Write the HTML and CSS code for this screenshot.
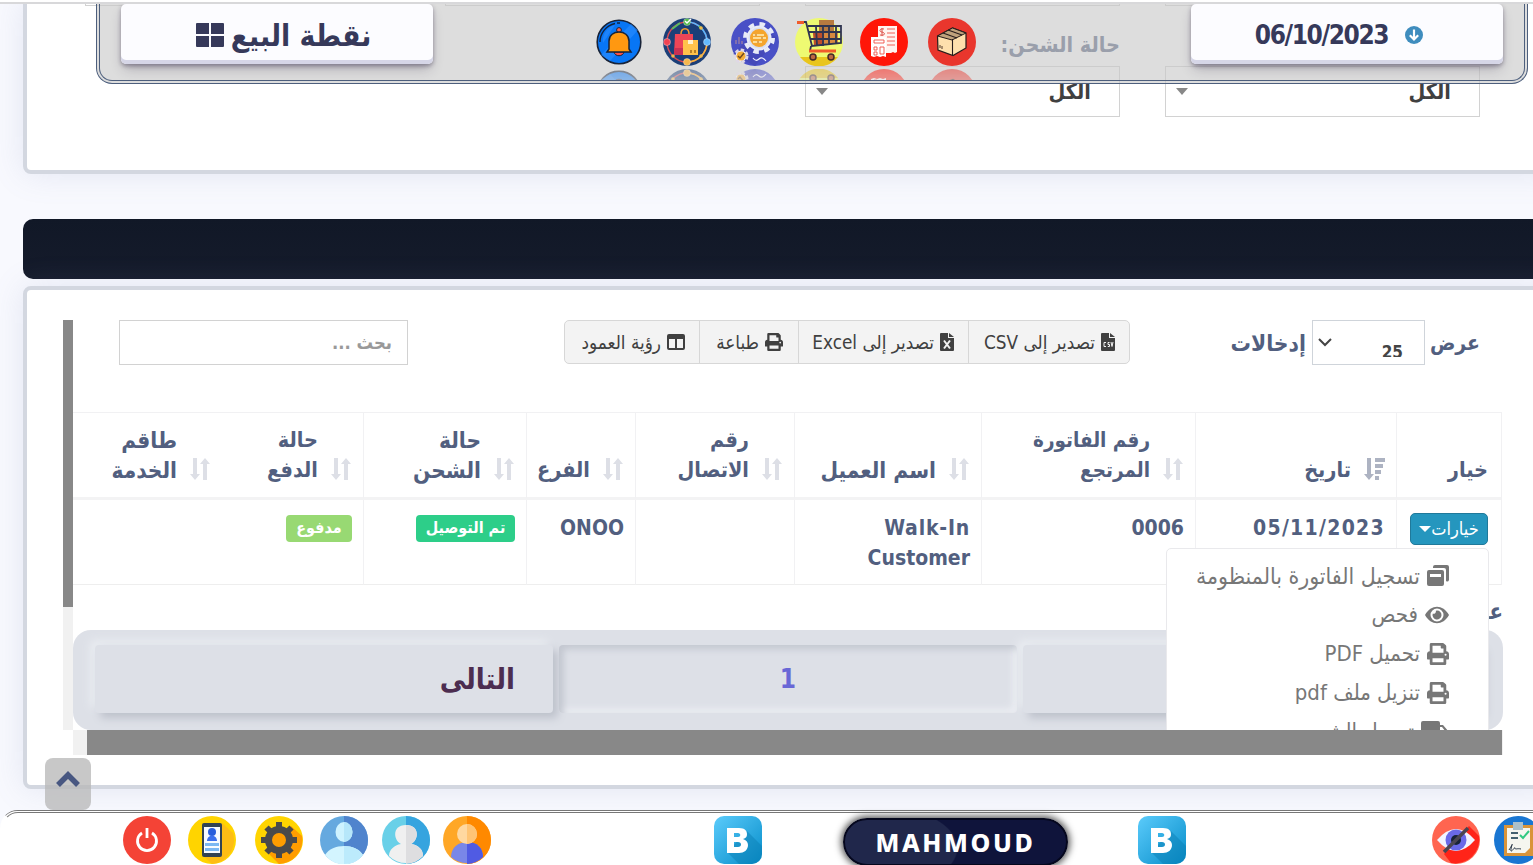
FILE: index.html
```
<!DOCTYPE html>
<html lang="ar">
<head>
<meta charset="utf-8">
<title>نقطة البيع</title>
<link rel="stylesheet" href="styles.css">
</head>
<body>
<svg class="defs" width="0" height="0">
  <symbol id="sort" viewBox="0 0 22 24"><path d="M4 1h4v16h3l-5 6-5-6h3zM14 23h4V7h3l-5-6-5 6h3z"/></symbol>
  <symbol id="printer" viewBox="0 0 512 512"><path d="M448 192V77a32 32 0 0 0-9-22L393 9a32 32 0 0 0-22-9H96a32 32 0 0 0-32 32v160c-35 0-64 29-64 64v112a16 16 0 0 0 16 16h48v96a32 32 0 0 0 32 32h320a32 32 0 0 0 32-32v-96h48a16 16 0 0 0 16-16V256c0-35-29-64-64-64zm-64 256H128v-96h256zm0-224H128V64h192v48a16 16 0 0 0 16 16h48zm48 72a24 24 0 1 1 0-48 24 24 0 0 1 0 48z"/></symbol>
  <symbol id="brand" viewBox="0 0 48 48">
    <defs><linearGradient id="bg" x1="0" y1="0" x2="1" y2="1"><stop offset="0" stop-color="#5bcbfb"/><stop offset="1" stop-color="#068dc9"/></linearGradient></defs>
    <rect width="48" height="48" rx="10" fill="url(#bg)"/>
    <path d="M33 15L48 30v8a10 10 0 0 1-10 10H25L13 36z" fill="#087db2" opacity=".45"/>
    <path fill-rule="evenodd" fill="#fff" d="M13 12h12c6 0 8 3 8 6s-1 4-4 5c3 1 5 3 5 6 0 5-4 8-9 8H13zM20 17v4h4c3 0 3-4 0-4zM20 26v5h4c4 0 4-5 0-5z"/>
  </symbol>
</svg>

<main class="page">
  <section class="card filters">
    <div class="filter-row filter-first"><div class="select"></div><div class="select"></div><div class="select"></div><div class="select"></div></div>
    <div class="filter-row">
      <div class="field"><label class="label" dir="rtl">حالة الشحن:</label><div class="select"><i class="caret"></i><span>الكل</span></div></div>
      <div class="field"><div class="label"></div><div class="select"><i class="caret"></i><span>الكل</span></div></div>
    </div>
  </section>

  <div class="banner"></div>

  <section class="card results">
    <div class="scroller">
      <div class="vbar"><div class="vthumb"></div></div>
      <div class="view">
        <div class="tools">
          <div class="search" dir="rtl">بحث ...</div>
          <div class="buttons" dir="rtl">
            <span class="btn csv"><svg width="14" height="18" viewBox="0 0 14 18"><path d="M1 0h7v5h6v12a1 1 0 0 1-1 1H1a1 1 0 0 1-1-1V1a1 1 0 0 1 1-1zM9 0l5 4H9z"/><path d="M5 9.500H3v4h2M8.500 9.500h-1.500v2h1.500v2H6.800M10 9l1 4.500L12 9" fill="none" stroke="#f3f3f3"/></svg><b>تصدير إلى CSV</b></span>
            <span class="btn excel"><svg width="14" height="18" viewBox="0 0 14 18"><path d="M1 0h7v5h6v12a1 1 0 0 1-1 1H1a1 1 0 0 1-1-1V1a1 1 0 0 1 1-1zM9 0l5 4H9z"/><path d="M4 7.500l6 8M10 7.500l-6 8" fill="none" stroke="#f3f3f3" stroke-width="2"/></svg><b>تصدير إلى Excel</b></span>
            <span class="btn print"><svg width="18" height="18"><use href="#printer"/></svg><b>طباعة</b></span>
            <span class="btn cols"><svg width="18" height="16" viewBox="0 0 18 16"><path fill-rule="evenodd" d="M2 0h14a2 2 0 0 1 2 2v12a2 2 0 0 1-2 2H2a2 2 0 0 1-2-2V2a2 2 0 0 1 2-2zM2 5v9h6V5zM10 5v9h6V5z"/></svg><b>رؤية العمود</b></span>
          </div>
          <div class="length" dir="rtl"><span class="show">عرض</span><div class="count"><em>25</em><svg width="14" height="9" viewBox="0 0 14 9"><path d="M1 1l6 6 6-6" fill="none" stroke="#444" stroke-width="2"/></svg></div><span>إدخالات</span></div>
        </div>

        <table dir="rtl">
          <colgroup><col class="c1"><col class="c2"><col class="c3"><col class="c4"><col class="c5"><col class="c6"><col class="c7"><col class="c8"><col class="c9"></colgroup>
          <thead><tr>
            <th><div>خيار</div></th>
            <th><div><svg class="active" width="22" height="24" viewBox="0 0 22 24"><path d="M4 1h4v16h3l-5 6-5-6h3zM12 1h10v4H12zM12 7h8v4h-8zM12 13h6v4h-6zM12 19h4v4h-4z"/></svg>تاريخ</div></th>
            <th class="tight"><div><svg width="22" height="24"><use href="#sort"/></svg><p>رقم الفاتورة<br>المرتجع</p></div></th>
            <th class="wide"><div><svg width="22" height="24"><use href="#sort"/></svg>اسم العميل</div></th>
            <th><div><svg width="22" height="24"><use href="#sort"/></svg><p>رقم<br>الاتصال</p></div></th>
            <th><div><svg width="22" height="24"><use href="#sort"/></svg>الفرع</div></th>
            <th class="wide"><div><svg width="22" height="24"><use href="#sort"/></svg><p>حالة<br>الشحن</p></div></th>
            <th class="plain"><div><svg width="22" height="24"><use href="#sort"/></svg><p>حالة<br>الدفع</p></div></th>
            <th class="plain wide"><div><svg width="22" height="24"><use href="#sort"/></svg><p>طاقم<br>الخدمة</p></div></th>
          </tr></thead>
          <tbody><tr>
            <td class="action"><span class="option">خيارات<i></i></span></td>
            <td><span class="date">05/11/2023</span></td><td>0006</td><td><span class="walk">Walk-In</span><br>Customer</td><td></td><td>ONOO</td>
            <td><span class="tag shipped">تم التوصيل</span></td>
            <td class="plain"><span class="tag paid">مدفوع</span></td><td class="plain"></td>
          </tr></tbody>
        </table>
        <div class="info" dir="rtl">عرض</div>
        <div class="pages">
          <div class="page-btn next" dir="rtl">التالى</div><div class="page-btn current">1</div><div class="page-btn"></div>
        </div>

        <div class="menu" dir="rtl">
          <div><svg width="22" height="22" viewBox="0 0 22 22"><path d="M8 0h12a2 2 0 0 1 2 2v13a2 2 0 0 1-3 1V5a2 2 0 0 0-2-2H6V2a2 2 0 0 1 2-2z"/><path fill-rule="evenodd" d="M2 5h13a2 2 0 0 1 2 2v12a2 2 0 0 1-2 2H2a2 2 0 0 1-2-2V7a2 2 0 0 1 2-2zM3 9v3h11V9z"/></svg><span class="register">تسجيل الفاتورة بالمنظومة</span></div>
          <div><svg width="24" height="20" viewBox="0 0 24 20"><path fill-rule="evenodd" d="M0 10C6-1 18-1 24 10 18 21 6 21 0 10zM12 3.500a6.500 6.500 0 1 0 0 13 6.500 6.500 0 0 0 0-13z"/><path d="M12 5.500a4.500 4.500 0 1 1-4.300 3.200 2.500 2.500 0 0 0 3.200-3z"/></svg><span>فحص</span></div>
          <div><svg width="22" height="22"><use href="#printer"/></svg><span>تحميل PDF</span></div>
          <div><svg width="22" height="22"><use href="#printer"/></svg><span>تنزيل ملف pdf</span></div>
          <div><svg width="28" height="22" viewBox="0 0 28 22"><path fill-rule="evenodd" d="M2 0h15a2 2 0 0 1 2 2v2h3l6 7v6H0V2a2 2 0 0 1 2-2zM19 6v5h6l-4-5z"/></svg><span>تحميل الشحن</span></div>
        </div>
      </div>
      <div class="hbar"><div class="hthumb"></div></div>
    </div>
  </section>
</main>

<div class="top-line"></div>
<header class="topbar">
  <div class="plate pos"><svg width="28" height="24" viewBox="0 0 28 24"><path d="M1 0h12v11H0V1a1 1 0 0 1 1-1zM15 0h12a1 1 0 0 1 1 1v10H15zM0 13h13v11H1a1 1 0 0 1-1-1zM15 13h13v10a1 1 0 0 1-1 1H15z"/></svg><span dir="rtl">نقطة البيع</span></div>
  <nav class="shortcuts">
    <svg viewBox="0 0 48 48"><circle cx="24" cy="24" r="21.800" fill="#0876f5" stroke="#182338" stroke-width="1.600"/><path d="M8 25A16 16 0 0 1 20 7M23 5h3M6 37L36 6l7 6L15 43z" fill="#2c8dff" opacity=".6"/><path d="M5 24A19 19 0 0 1 20 5.500M22 5h3" fill="none" stroke="#13233e" stroke-width="1.400"/><circle cx="24" cy="12" r="2.400" fill="#f26552" stroke="#172338"/><path d="M19 34c1 5 9 5 10 0z" fill="#fb5148" stroke="#172338"/><path d="M14 31V23c0-12 20-12 20 0v8l2 3H12z" fill="#ff9811" stroke="#172338" stroke-width="1.500"/></svg>
    <svg viewBox="0 0 48 48"><circle cx="24" cy="24" r="24" fill="#1b3f78"/><circle cx="24" cy="24" r="20" fill="none" stroke="#d94b55" stroke-width="1.400"/><path d="M24 4a20 20 0 0 1 20 20" fill="none" stroke="#58b8ff" stroke-width="1.600"/><path d="M44 24a20 20 0 0 1-20 20" fill="none" stroke="#f4b542" stroke-width="1.600"/><path d="M9 11l8-6M39 11l-3-3" stroke="#59bc60" stroke-width="2"/><path d="M18 16c0-7 8-7 8 0" fill="none" stroke="#f69e2d" stroke-width="1.500"/><path d="M12 16h18v21H11z" fill="#ed4557"/><path d="M11 30h9v7h-9z" fill="#c93154"/><path d="M20 22h15v15H20z" fill="#ffc24b"/><path d="M25 22h5v4h-5z" fill="#fff2d0"/><path d="M27 32h2v3h-2zM31 32h2v3h-2z" fill="#b98026"/><g stroke="#fff" stroke-opacity=".35"><circle cx="24" cy="4" r="3.500" fill="#53b848"/><circle cx="4" cy="24" r="3.500" fill="#f04352"/><circle cx="44" cy="24" r="3.500" fill="#63baff"/><circle cx="24" cy="44" r="3.500" fill="#f5b74e"/></g><path d="M22 3l2 2 4-4" stroke="#fff" fill="none" stroke-width="1.500"/><g fill="#edb84e"><circle cx="38" cy="38" r="1.800"/><circle cx="38" cy="10" r="1.800"/><circle cx="10" cy="38" r="1.800"/></g></svg>
    <svg viewBox="0 0 48 48"><circle cx="24" cy="24" r="24" fill="#4950c6"/><path d="M2 36L30 8l16 12L24 48z" fill="#4141ac" opacity=".5"/><circle cx="28" cy="20" r="11.500" fill="#d8def1" stroke="#e8ebf7" stroke-width="2"/><circle cx="28" cy="20" r="14" fill="none" stroke="#e8ebf7" stroke-width="4" stroke-dasharray="5.500 5.500"/><circle cx="28" cy="20" r="9" fill="#f5a52d"/><path d="M22 17h11M22 20h13M22 24h9" stroke="#fff0ba" stroke-width="1.300"/><path d="M25 16v2M31 19v2M27 23v2" stroke="#b66d1c"/><circle cx="10" cy="38" r="5.500" fill="#fff" stroke="#dfd8e5" stroke-width="4" stroke-dasharray="3 2"/><circle cx="10" cy="38" r="4.500" fill="#f5ad37"/><path d="M7 38l2 2 4-5" fill="none" stroke="#704923" stroke-width="1.500"/><path d="M5 26v-4M8 26v-7M11 26v-3" stroke="#9278a8" stroke-width="1.500"/><path d="M22 40q3 4 6 1t7 2" fill="none" stroke="#f6f6ff" stroke-width="1.200"/></svg>
    <svg viewBox="0 0 48 48"><circle cx="24" cy="24" r="24" fill="#eefa72"/><path d="M5 39h38A24 24 0 0 1 5 39z" fill="#e9c51d"/><path d="M24 2h15v16H24z" fill="#b77a40"/><path d="M18 15h11v13H19z" fill="#bd4e2b"/><path d="M29 14h14v12H29z" fill="#d7893f"/><path d="M9 4h2l6 24 29-3V8H13M14 14h32M15 21h31M21 9l1 18M28 8v20M34 8v18M41 8v18M16 28l-1 5h26" fill="none" stroke="#303550" stroke-width="1.800"/><path d="M2 4.500h7M14 33h27" stroke="#f15b2b" stroke-width="3"/><circle cx="18" cy="39" r="3" fill="#bd6741" stroke="#462b27" stroke-width="1.500"/><circle cx="36" cy="39" r="3" fill="#bd6741" stroke="#462b27" stroke-width="1.500"/></svg>
    <svg viewBox="0 0 48 48"><circle cx="24" cy="24" r="24" fill="#ff1608"/><path d="M18 8h19v26l-2 1-2-1-2 1H26V19h-8z" fill="#fff4ef"/><path d="M11 19h15v20l-3-1-3 1-3-1-3 1-3-1z" fill="#fff"/><path d="M27 11h8M27 15h8M27 19h8M27 23h8M27 27h8M14 22h10v3H14zM14 29h3v3h-3zM14 34h3v3h-3zM20 29h4v7h-4z" fill="none" stroke="#ef5146" stroke-width=".9"/><path d="M24 11c-5-1-5 3-2 3 4 1 3 4-2 3M22 10v8" fill="none" stroke="#dc5048"/></svg>
    <svg viewBox="0 0 48 48"><circle cx="24" cy="24" r="24" fill="#e9362d"/><path d="M9.500 18l15-8 13.500 5v15L25 37.500 10 32z" fill="#fee0ad" stroke="#271d1c" stroke-width="1.200"/><path d="M9.500 18l15-8 13.500 5-14 7z" fill="#bfa27c" stroke="#271d1c"/><path d="M24.500 21v16M15 15l14 5M20 12l14 5" fill="none" stroke="#271d1c" stroke-width="1.100"/><path d="M12 27v3M14 28v3" stroke="#51382a"/></svg>
  </nav>
  <div class="plate today"><span>06/10/2023</span><svg width="18" height="18" viewBox="0 0 18 18"><circle cx="9" cy="9" r="9" fill="#3f8dbe"/><path d="M9 3.500v10M4.800 9.300L9 13.500l4.200-4.200" fill="none" stroke="#fff" stroke-width="2.200"/></svg></div>
</header>

<div class="to-top"><svg width="26" height="18" viewBox="0 0 26 18"><path d="M3 15L13 5l10 10" fill="none" stroke="#485781" stroke-width="5.500"/></svg></div>

<footer class="dock">
  <div class="group users">
    <svg viewBox="0 0 48 48"><circle cx="24" cy="24" r="24" fill="#f44336"/><path d="M19 17a9.500 9.500 0 1 0 10 0M24 12v10" fill="none" stroke="#fff" stroke-width="2.800"/></svg>
    <svg viewBox="0 0 48 48"><circle cx="24" cy="24" r="24" fill="#ffd400"/><path d="M34 7l11 10a24 24 0 0 1-21 31l-9-8z" fill="#fdbd15"/><rect x="14" y="7" width="20" height="34" rx="2" fill="#314354"/><path d="M16 11h16v26H16z" fill="#f7fbff"/><circle cx="24" cy="16" r="4" fill="#285edc"/><path d="M19 25c0-7 10-7 10 0z" fill="#3b70ed"/><path d="M17 27h14v3H17zM17 32h14v3H17z" fill="#7bb8f2"/></svg>
    <svg viewBox="0 0 48 48"><circle cx="24" cy="24" r="24" fill="#ffd400"/><path d="M36 10l11 10a24 24 0 0 1-23 28l-10-10z" fill="#ff9d00"/><g stroke="#4a4a4a" stroke-width="6"><path d="M24 6v36M6 24h36M11.500 11.500l25 25M36.500 11.500l-25 25"/></g><circle cx="24" cy="24" r="10.500" fill="#ff9d00" stroke="#4a4a4a" stroke-width="7"/></svg>
    <svg viewBox="0 0 48 48"><circle cx="24" cy="24" r="24" fill="#65a9df"/><path d="M24 0a24 24 0 0 1 0 48z" fill="#5084cd"/><ellipse cx="24" cy="16" rx="8.500" ry="10" fill="#cef3ff"/><path d="M24 6a8.500 10 0 0 1 0 20z" fill="#b6e7fa"/><path d="M5 39c7-12 31-12 38 0a24 24 0 0 1-38 0z" fill="#d3f5ff"/><path d="M24 30c8 0 15 3 19 9a24 24 0 0 1-19 9z" fill="#bcebfc"/></svg>
    <svg viewBox="0 0 48 48"><circle cx="24" cy="24" r="24" fill="#69d0e8"/><path d="M24 0a24 24 0 0 1 0 48z" fill="#36a4df"/><path d="M24 9c14 0 13 15 5 19 8 1 12 6 12 12a24 24 0 0 1-34 0c0-6 5-11 12-12-8-4-9-19 5-19z" fill="#f0f0f0"/><path d="M24 9c14 0 13 15 5 19 8 1 12 6 12 12a24 24 0 0 1-17 8z" fill="#dedee0"/></svg>
    <svg viewBox="0 0 48 48"><circle cx="24" cy="24" r="24" fill="#ffa726"/><path d="M24 0a24 24 0 0 1 0 48z" fill="#ff8900"/><path d="M8 41c0-20 32-20 32 0a24 24 0 0 1-32 0z" fill="#7987e8"/><path d="M24 26c10 0 16 6 16 15a24 24 0 0 1-16 7z" fill="#505be3"/><circle cx="24" cy="18" r="10" fill="#ffd8a0"/><path d="M24 8a10 10 0 0 1 0 20z" fill="#ffc474"/></svg>
  </div>
  <svg class="brand-one"><use href="#brand"/></svg>
  <div class="name">MAHMOUD</div>
  <svg class="brand-two"><use href="#brand"/></svg>
  <div class="group extras">
    <svg viewBox="0 0 48 48"><circle cx="24" cy="24" r="24" fill="#ff6550"/><path d="M37 10l10 10a24 24 0 0 1-28 27l-7-9z" fill="#ff2419"/><path d="M5 24Q24 2 43 24 24 46 5 24z" fill="#f2f4ff"/><circle cx="24" cy="24" r="10.500" fill="#6a69e8"/><circle cx="24" cy="24" r="5" fill="#182338"/><path d="M12 36l24-24" stroke="#4b4551" stroke-width="3.500"/></svg>
    <svg viewBox="0 0 48 48"><circle cx="24" cy="24" r="24" fill="#1976d2"/><path d="M10 9h29v31H10z" fill="#d99439"/><path d="M13 12h23v20l-5 5H13z" fill="#f5f6ef"/><path d="M19 6h10v8H19z" fill="#abc0cb"/><path d="M17 17h7M17 22h7" stroke="#44616f" stroke-width="2"/><path d="M26 19l3 3 6-7" fill="none" stroke="#31c981" stroke-width="2"/><path d="M15 34c5-8 3-7 2-1s4-3 4-1 2 0 6 1" fill="none" stroke="#263444"/></svg>
  </div>
</footer>
</body>
</html>
```
FILE: styles.css
```
*{box-sizing:border-box}
html,body{margin:0;height:100%;overflow:hidden}
body{background:#f8f9fe;color:#525f7f;font-family:"DejaVu Sans Condensed","DejaVu Sans",sans-serif;font-stretch:condensed}
svg{display:block;flex:none}
p{margin:0}
.defs{position:absolute}
.page{width:1560px;height:865px;padding-left:23px;overflow:hidden}
.card{background:#fff;border:4px solid #d3d7e0;border-radius:8px;box-shadow:0 0 32px rgba(120,130,180,.16)}
.filters{height:174px;border-top:0;border-radius:0 0 8px 8px}
.filter-row{display:flex;gap:45px;padding-left:778px}
.filter-first{height:6px;padding-left:58px;align-items:flex-end}
.filter-first .select{height:50px}
.select{width:315px;height:51px;border:1px solid #d2d2d2;background:#fff;display:flex;justify-content:space-between;align-items:center;padding:0 28px 0 10px;color:#404040;font-size:21.5px;font-weight:bold}
.caret{border:6px solid transparent;border-top:7px solid #888;border-bottom:0}
.label{display:block;height:60px;padding-top:23px;text-align:right;font-weight:bold;font-size:21.500px;line-height:32px}
.banner{height:60px;margin-top:45px;background:linear-gradient(#111827,#151b2b);border-radius:10px}
.results{height:503px;margin-top:7px;padding:30px 0 0 36px}
.scroller{width:1440px;height:435px;display:grid;grid-template:410px 25px/10px 1430px}
.vbar{background:#f1f1f1}
.vthumb{height:287px;background:#888}
.hbar{grid-column:2;background:#f1f1f1;padding:0 1px 0 14px}
.hthumb{height:25px;background:#888}
.view{position:relative;overflow:hidden}
.tools{height:92px;display:flex;align-items:flex-start;padding-left:46px}
.search{width:289px;height:45px;border:1px solid #d2d2d2;line-height:43px;padding-right:15px;color:#999;font-size:18.3px;font-weight:bold}
.buttons{width:566px;height:44px;margin-left:156px;display:flex;border:1px solid #d7d7d7;border-radius:5px;background:#f3f3f3;color:#404040}
.btn{display:flex;align-items:center;gap:6px;padding-right:14px;border-left:1px solid #d7d7d7;font-size:18.8px;white-space:nowrap}
.btn:last-child{border-left:0}
.btn b{font-weight:normal}
.btn svg{fill:#404040}
.csv{width:161px}.excel{width:170px}.print{width:99px;padding-right:15px}.cols{width:134px}
.length{width:250px;height:45px;margin-left:100px;display:flex;align-items:center;gap:6px;font-size:22.7px;font-weight:bold}
.show{width:49px;font-size:21px}
.count{flex:none;width:113px;height:45px;border:1px solid #cfd4da;color:#444;display:flex;justify-content:space-between;padding:17px 21px 0 5px}
.count em{height:19px;overflow:hidden;font-size:17px;font-style:normal;line-height:29px}
table{width:1429px;height:173px;table-layout:fixed;border-collapse:separate;border-spacing:0;border-top:1px solid #f1f1f3;border-right:1px solid #f1f1f3}
.c1{width:105px}.c2{width:201px}.c3{width:214px}.c4{width:187px}.c5{width:159px}.c6{width:109px}.c7{width:163px}.c8{width:141px}.c9{width:149px}
th,td{border-left:1px solid #f1f1f3;padding:0 11px 0 0;text-align:right;white-space:nowrap}
.plain{border-left:0}
th{height:87px;border-bottom:3px solid #f3f3f4;padding-bottom:12px;vertical-align:bottom;font-size:21.500px;line-height:30px}
th.tight{font-size:20.500px}
th.wide{font-size:22.500px}
th:first-child{padding-right:13px}
th div{display:flex;align-items:flex-end;gap:12px}
th svg{fill:#dddfe6;margin-bottom:4px}
th svg.active{fill:#adb3c2}
td{height:85px;border-bottom:1px solid #eee;padding-top:13px;vertical-align:top;font-size:21px;font-weight:bold;line-height:30px}
.date{letter-spacing:1.3px}
.walk{letter-spacing:.8px}
td.action{padding-right:13px}
.option{display:flex;width:78px;height:32px;align-items:center;justify-content:center;border:1px solid #20799a;border-radius:5px;background:#2596be;color:#fff;font-size:18px;font-weight:normal}
.option i{border:6px solid transparent;border-top-color:#fff;border-bottom:0}
.tag{display:block;height:27px;border-radius:4px;color:#fff;text-align:center;font-size:16px;line-height:26px;margin-top:2px}
.shipped{width:99px;background:#2dce89}.paid{width:66px;background:#98d973}
.info{height:45px;padding-top:12px;font-size:22px;font-weight:bold;line-height:30px}
.pages{height:100px;border-radius:18px;background:#dde0e7;display:flex;gap:6px;padding:15px 22px 17px}
.page-btn{flex:0 0 458px;border-radius:4px;box-shadow:5px 5px 8px #bdc1cb,-5px -5px 9px #e9ecf1;color:#6967d6;text-align:center;font-weight:bold;font-size:26px;line-height:68px}
.next{padding-right:38px;color:#4c2d50;text-align:right;font-size:29px}
.current{box-shadow:inset 4px 4px 7px #c3c7d0,inset -4px -4px 7px #eceef3}
.menu{position:absolute;left:1093px;top:228px;width:323px;height:240px;padding:7px 39px;background:#fff;border:1px solid #e9e9ec;border-radius:5px;color:#777;font-size:22px}
.menu div{height:39px;display:flex;align-items:center;gap:7px;white-space:nowrap}
.menu svg{fill:#777}
.register{font-size:22.900px}
.top-line{position:absolute;left:0;right:0;top:0;height:4px;background:#d8d8da;border-top:2px solid #fff}
.topbar{position:absolute;left:96px;top:4px;width:1432px;height:80px;border:4px double #4d5f7d;border-top:0;border-radius:0 0 16px 16px;background:rgba(200,200,200,.61);display:flex;align-items:flex-start;overflow:hidden}
.plate{flex:none;height:60px;border-radius:5px;background:#fcfcff;box-shadow:0 2px 4px rgba(45,35,66,.4),0 7px 13px -3px rgba(45,35,66,.3),inset 0 -4px 0 #d6d6e7;color:#36395a;display:flex;align-items:center;justify-content:center;font-weight:bold}
.plate svg{fill:#36395a}
.pos{width:312px;margin-left:21px;gap:7px;font-size:29.8px;padding:2px 0 0 13px}
.today{width:312px;margin-left:215px;gap:17px;font-size:26px;letter-spacing:-1.4px;padding:2px 16px 0 0}
.shortcuts{width:381px;margin:14px 0 0 162px;display:flex;gap:20px}
.shortcuts svg{width:48px;height:48px;-webkit-box-reflect:below 3px linear-gradient(transparent,rgba(0,0,0,.5))}
.shortcuts svg:nth-child(4){margin-left:-4px}
.shortcuts svg:nth-child(5){margin-left:-3px}
.to-top{position:absolute;left:45px;top:758px;width:46px;height:52px;border-radius:8px;background:rgba(185,185,185,.78);display:flex;justify-content:center;padding-top:12px}
.dock{position:absolute;left:0;top:810px;width:1600px;height:75px;border-top:3px double #777;border-left:3px double transparent;border-radius:18px 0 0 0;background:#fff;display:flex;align-items:flex-start;padding:3px 0 0 120px}
.dock svg{width:48px;height:48px}
.users{width:368px;gap:17px}
.users svg:nth-child(3){margin-left:2px}
.users svg:nth-child(5){margin-left:-3px}
.users svg:nth-child(6){margin-left:-4px}
.group{display:flex}
.dock .brand-one{margin-left:223px}
.name{width:225px;height:48px;margin:2px 70px 0 81px;border:2px solid #05071d;border-radius:25px;background:radial-gradient(ellipse 80px 42px at 33px 28px,#20274b 98%,#0f143b 100%);box-shadow:0 0 7px 2px #555;color:#fff;text-align:center;font:800 25px/44px "Noto Sans",sans-serif;letter-spacing:2.6px}
.extras{width:110px;margin-left:246px;gap:14px}
```
